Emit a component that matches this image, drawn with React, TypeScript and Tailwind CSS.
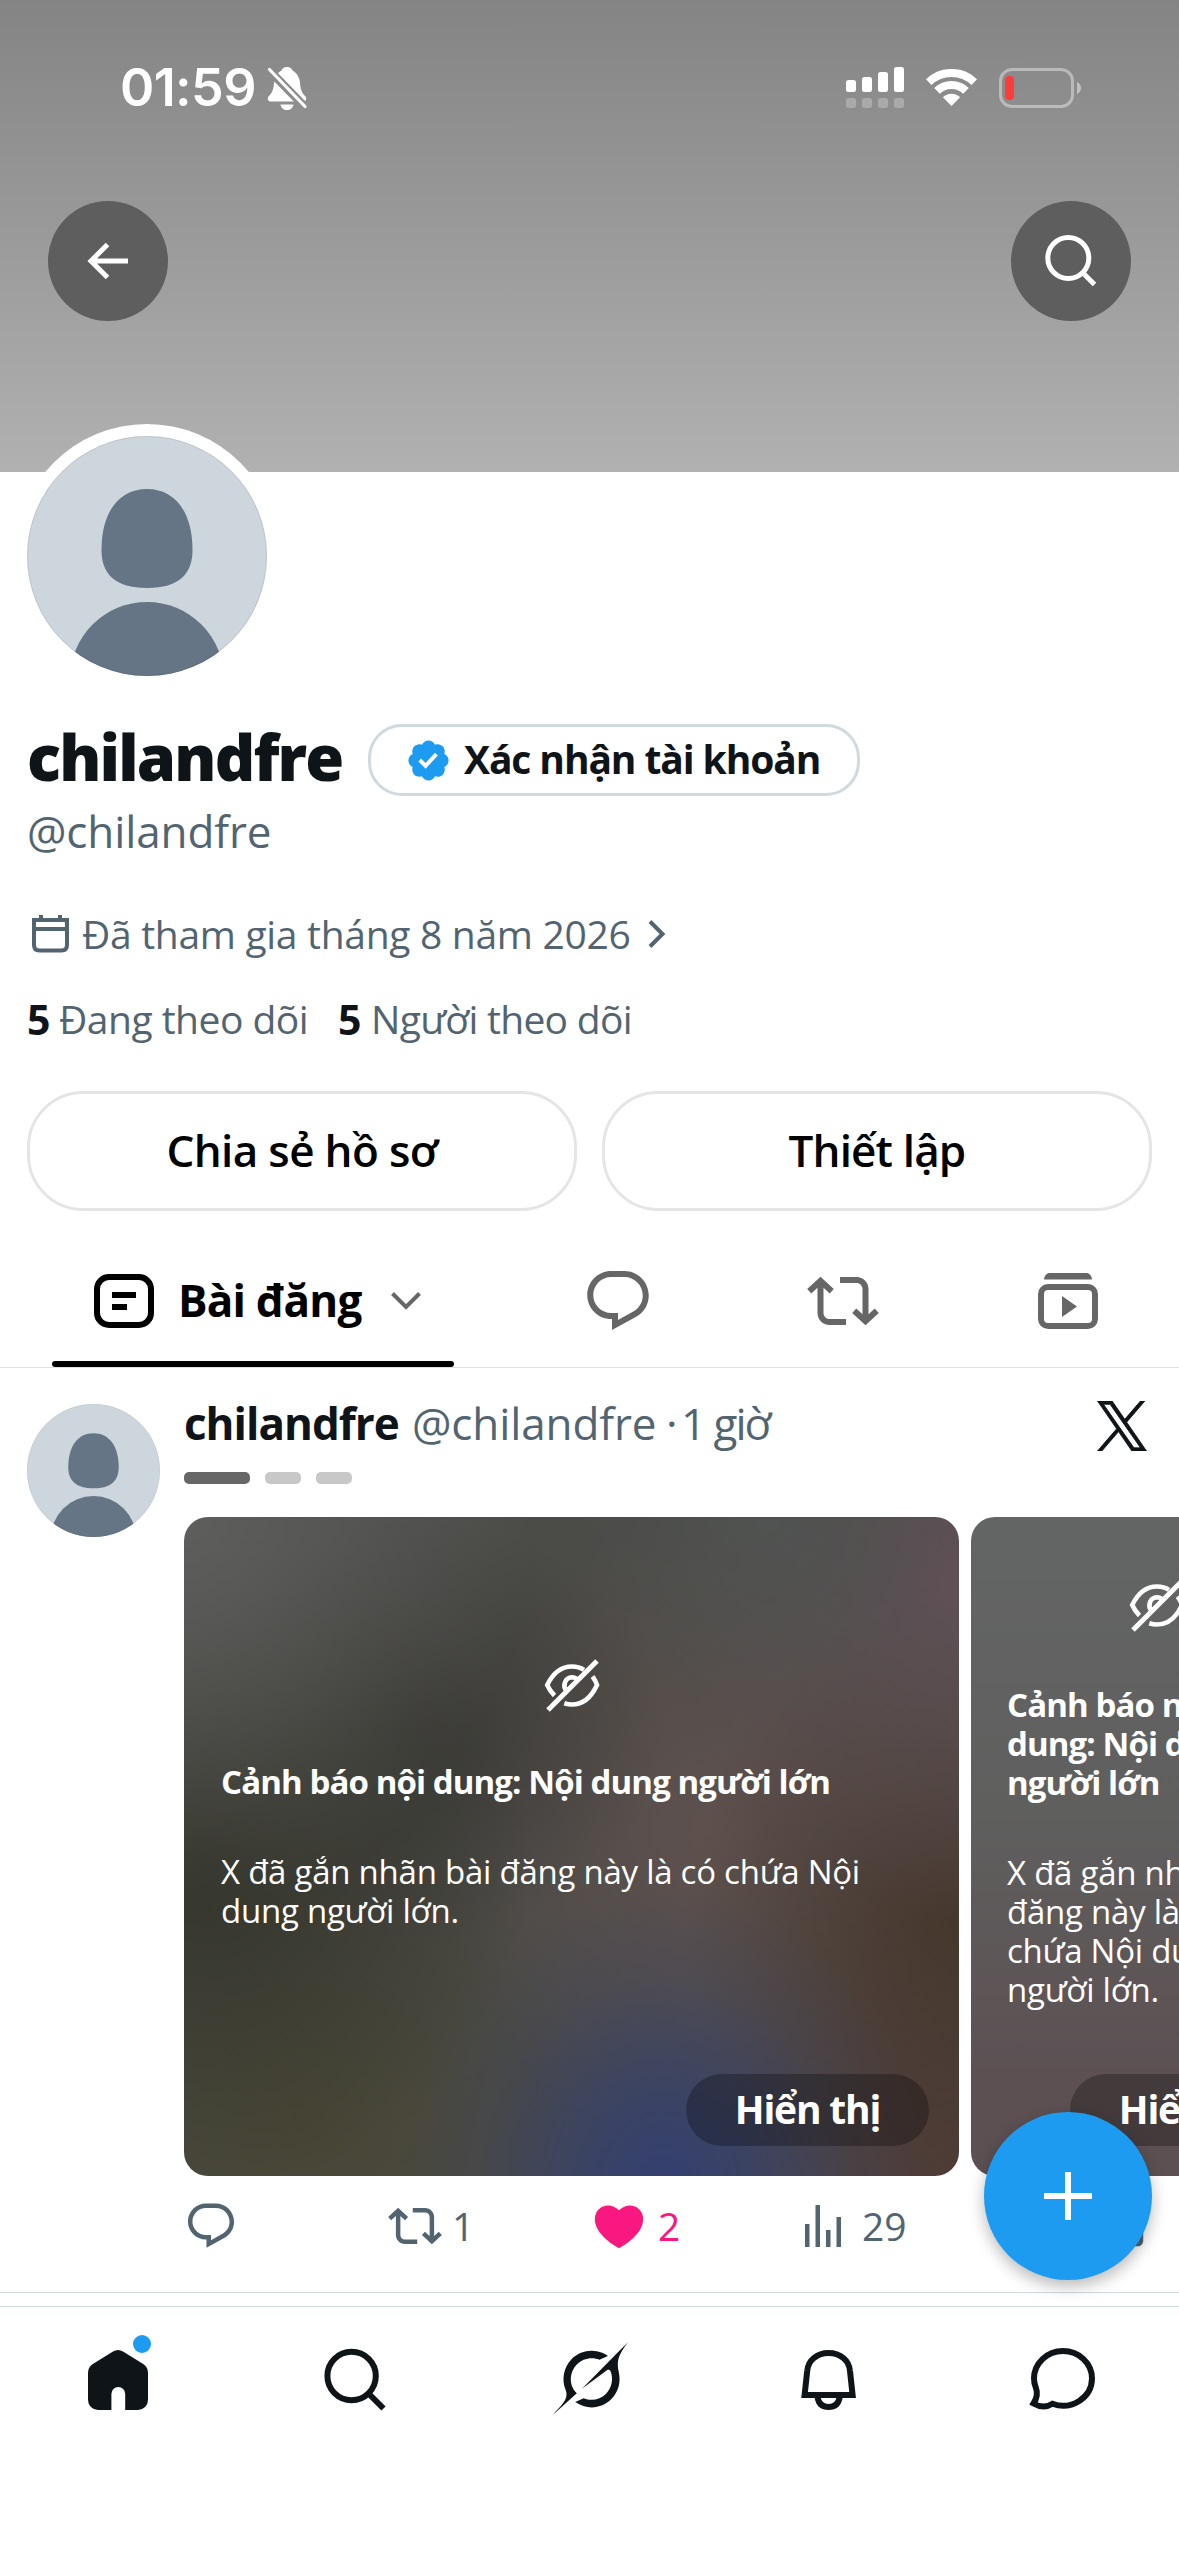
import { ReactNode } from "react";

const nav = "w-[72px] h-[72px] text-[#0f1419]";

function Avatar({ className }: { className: string }) {
  return (
    <svg viewBox="0 0 240 240" className={className}>
      <clipPath id="round">
        <circle cx="120" cy="120" r="120" />
      </clipPath>
      <g clipPath="url(#round)">
        <rect width="240" height="240" fill="#ccd6dc" />
        <path
          fill="#667585"
          d="M120 53C148 53 165.500 76 165.500 114C165.500 138 152 152 120 152C88 152 74.500 138 74.500 114C74.500 76 92 53 120 53Z"
        />
        <circle cx="120" cy="243" r="77" fill="#667585" />
      </g>
      <circle cx="120" cy="120" r="119.500" fill="none" stroke="#000" strokeOpacity="0.08" />
    </svg>
  );
}

function ReplyIcon({ className }: { className: string }) {
  return (
    <svg viewBox="0 0 24 24" fill="currentColor" className={className}>
      <path d="M1.751 10c0-4.42 3.584-8 8.005-8h4.366c4.49 0 8.129 3.64 8.129 8.13 0 2.96-1.607 5.68-4.196 7.11l-8.054 4.46v-3.69h-.067c-4.49.1-8.183-3.51-8.183-8.01zm8.005-6c-3.317 0-6.005 2.69-6.005 6 0 3.37 2.77 6.08 6.138 6.01l.351-.01h1.761v2.3l5.087-2.81c1.951-1.08 3.163-3.13 3.163-5.36 0-3.39-2.744-6.13-6.129-6.13H9.756z" />
    </svg>
  );
}

function RepostIcon({ className }: { className: string }) {
  return (
    <svg viewBox="0 0 24 24" fill="currentColor" className={className}>
      <path d="M4.5 3.88l4.432 4.14-1.364 1.46L5.5 7.55V16c0 1.1.896 2 2 2H13v2H7.5c-2.209 0-4-1.79-4-4V7.55L1.432 9.48.068 8.02 4.5 3.88zM16.5 6H11V4h5.5c2.209 0 4 1.79 4 4v8.45l2.068-1.93 1.364 1.46-4.432 4.14-4.432-4.14 1.364-1.46 2.068 1.93V8c0-1.1-.896-2-2-2z" />
    </svg>
  );
}

function EyeOffIcon() {
  return (
    <svg viewBox="0 0 56 56" fill="none" stroke="#fff" strokeWidth="4.600" className="w-14 h-14 shrink-0">
      <path d="M10.500 37.500C7.500 34.500 5 31 3.200 27C9.500 14 18 8.500 28 8.500C32.500 8.500 36.500 9.500 40 11.800" />
      <path d="M48.500 18.500C50.500 21 52 24 53 27C46.500 41 38 46.500 28 46.500C25.300 46.500 22.700 46 20.300 45.200" />
      <path d="M22 32.500C18.500 27.500 21 19.500 28 19.300C30 19.300 31.500 20 33 21" />
      <path d="M4 52L53 3" strokeWidth="5" />
    </svg>
  );
}

function StatusBar() {
  return (
    <div className="h-[176px] pl-[120px] pr-[98px] flex items-center text-white">
      <span className="font-['Inter',sans-serif] font-semibold text-[52px] leading-none tracking-[-0.6px]">01:59</span>
      <svg viewBox="0 0 42 46" className="w-[42px] h-[46px] ml-[10px]">
        <mask id="cut">
          <rect width="42" height="46" fill="#fff" />
          <path d="M1 3L42 45" stroke="#000" strokeWidth="8.500" />
        </mask>
        <g mask="url(#cut)" fill="#fff">
          <path d="M21 2C24 2 26 3.500 26.500 5.500C31 8 33.500 12.500 34 18C34.500 25 36 28 39.500 31.500C41 33.500 40 36.500 37.500 36.500H4.500C2 36.500 1 33.500 2.500 31.500C6 28 7.500 25 8 18C8.500 12.500 11 8 15.500 5.500C16 3.500 18 2 21 2Z" />
          <path d="M14.500 39.500H27.500C27 43 24.500 45 21 45C17.500 45 15 43 14.500 39.500Z" />
        </g>
        <path d="M3.500 4.500L39 41.500" stroke="#fff" strokeWidth="3.200" strokeLinecap="round" />
      </svg>
      <div className="flex-1" />
      <svg viewBox="0 0 58 42" className="w-[58px] h-[42px]">
        <g fill="#fff">
          <rect x="0" y="13" width="10" height="12" rx="2.500" />
          <rect x="16" y="10" width="10" height="15" rx="2.500" />
          <rect x="32" y="5" width="10" height="20" rx="2.500" />
          <rect x="48" y="0" width="10" height="25" rx="2.500" />
        </g>
        <g fill="#fff" fillOpacity="0.250">
          <rect x="0" y="31" width="10" height="10" rx="2.500" />
          <rect x="16" y="31" width="10" height="10" rx="2.500" />
          <rect x="32" y="31" width="10" height="10" rx="2.500" />
          <rect x="48" y="31" width="10" height="10" rx="2.500" />
        </g>
      </svg>
      <svg viewBox="0 0 51 38" className="w-[51px] h-[38px] ml-[22px]">
        <path d="M2.700 13.100A33 33 0 0 1 48.300 13.100" fill="none" stroke="#fff" strokeWidth="8" />
        <path d="M11 21.800A21 21 0 0 1 40 21.800" fill="none" stroke="#fff" strokeWidth="8" />
        <path d="M25.500 37L16.900 28.300A12.200 12.200 0 0 1 34.100 28.300Z" fill="#fff" />
      </svg>
      <svg viewBox="0 0 82 40" className="w-[82px] h-10 ml-[22px]">
        <rect x="1.500" y="1.500" width="72" height="37" rx="11.500" fill="none" stroke="#fff" strokeOpacity="0.400" strokeWidth="3" />
        <path d="M78 14C80.500 15 82 17.500 82 20C82 22.500 80.500 25 78 26Z" fill="#fff" fillOpacity="0.450" />
        <rect x="6" y="8" width="9" height="24" rx="4" fill="#ff3b3b" />
      </svg>
    </div>
  );
}

function Banner() {
  return (
    <div className="h-[472px] shrink-0 bg-linear-to-b from-[#848484] to-[#b1b1b1]">
      <StatusBar />
      <div className="flex justify-between px-12 mt-[25px]">
        <div className="w-[120px] h-[120px] rounded-full bg-[#5e5e5e]">
          <svg viewBox="0 0 120 120" fill="none" stroke="#fff" strokeWidth="5">
            <path d="M59.500 43.500L43 60L59.500 76.500M43 60H80" />
          </svg>
        </div>
        <div className="w-[120px] h-[120px] rounded-full bg-[#5e5e5e]">
          <svg viewBox="0 0 120 120" fill="none" stroke="#fff" strokeWidth="5">
            <circle cx="57.300" cy="57" r="20.500" />
            <path d="M71.500 71.500L83.500 83.500" />
          </svg>
        </div>
      </div>
    </div>
  );
}

function Profile() {
  return (
    <div className="flex flex-col">
      <div className="w-[264px] h-[264px] ml-[15px] -mt-12 p-3 rounded-full bg-white">
        <Avatar className="w-[240px] h-[240px]" />
      </div>
      <div className="px-[27px] flex flex-col">
        <div className="flex items-center mt-9 h-[72px]">
          <h1 className="font-extrabold text-[63px] leading-[64px] pb-[6px] tracking-[-1.8px] w-[341px] whitespace-nowrap">chilandfre</h1>
          <div className="w-[492px] h-[72px] rounded-[34px] border-[3px] border-[#cfd9de] flex items-center pl-[34px]">
            <svg viewBox="0 0 22 22" className="w-[47px] h-[47px]">
              <path
                fill="#1d9bf0"
                d="M20.396 11c-.018-.646-.215-1.275-.57-1.816-.354-.54-.852-.972-1.438-1.246.223-.607.27-1.264.14-1.897-.131-.634-.437-1.218-.882-1.687-.47-.445-1.053-.75-1.687-.882-.633-.13-1.29-.083-1.897.14-.273-.587-.704-1.086-1.245-1.44S11.647 1.62 11 1.604c-.646.017-1.273.213-1.813.568s-.969.854-1.24 1.44c-.608-.223-1.267-.272-1.902-.14-.635.13-1.22.436-1.69.882-.445.47-.749 1.055-.878 1.688-.13.633-.08 1.29.144 1.896-.587.274-1.087.705-1.443 1.245-.356.54-.555 1.17-.574 1.817.02.647.218 1.276.574 1.817.356.54.856.972 1.443 1.245-.224.606-.274 1.263-.144 1.896.13.634.433 1.218.877 1.688.47.443 1.054.747 1.687.878.633.132 1.29.084 1.897-.136.274.586.705 1.084 1.246 1.439.54.354 1.17.551 1.816.569.647-.016 1.276-.213 1.817-.567s.972-.854 1.245-1.44c.604.239 1.266.296 1.903.164.636-.132 1.22-.447 1.68-.907.46-.46.776-1.044.908-1.681s.075-1.299-.165-1.903c.586-.274 1.084-.705 1.439-1.246.354-.54.551-1.17.569-1.816zM9.662 14.85l-3.429-3.428 1.293-1.302 2.072 2.072 4.4-4.794 1.347 1.246z"
              />
            </svg>
            <span className="font-bold text-[39px] leading-10 ml-[12px] pb-[2px] tracking-[-1.1px] whitespace-nowrap">Xác nhận tài khoản</span>
          </div>
        </div>
        <p className="text-[44px] leading-[60px] mt-[5px] text-[#536471] tracking-[-0.1px]">@chilandfre</p>
        <div className="flex items-center h-10 mt-[53px] text-[#536471]">
          <svg viewBox="0 0 37 38" fill="none" stroke="currentColor" strokeWidth="4" className="w-[37px] h-[38px] ml-[5px]">
            <path d="M2 5H35V30C35 33.500 33 35.500 29.500 35.500H7.500C4 35.500 2 33.500 2 30Z" />
            <path d="M2 14H35" />
            <path d="M9 0V5M28 0V5" />
          </svg>
          <span className="text-[39px] leading-10 ml-[13px] w-[566px] tracking-[-0.3px] whitespace-nowrap">Đã tham gia tháng 8 năm 2026</span>
          <svg viewBox="0 0 18 28" fill="none" stroke="currentColor" strokeWidth="4" className="w-[18px] h-7">
            <path d="M2 1.500L14.500 14L2 26.500" />
          </svg>
        </div>
        <div className="flex items-center h-10 mt-[45px] text-[39px] leading-10 text-[#536471] whitespace-nowrap">
          <b className="text-[#0f1419] w-8 text-[41px]">5</b>
          <span className="w-[279px] tracking-[-0.5px]">Đang theo dõi</span>
          <b className="text-[#0f1419] w-[33px] text-[41px]">5</b>
          <span className="tracking-[-0.7px]">Người theo dõi</span>
        </div>
        <div className="grid grid-cols-2 gap-[25px] mt-[52px] font-semibold text-[44px] text-black">
          <button className="h-[120px] pb-[3px] rounded-[56px] border-[3px] border-[#e5e5e5] tracking-[-0.65px]">Chia sẻ hồ sơ</button>
          <button className="h-[120px] pb-[3px] rounded-[56px] border-[3px] border-[#e5e5e5] tracking-[-0.85px]">Thiết lập</button>
        </div>
      </div>
    </div>
  );
}

function Tab({ children }: { children: ReactNode }) {
  return <div className="flex-1 h-[120px] mb-[6px] pl-[2px] flex items-center justify-center text-[#666]">{children}</div>;
}

function Tabs() {
  return (
    <div className="flex items-end h-[157px] border-b border-[#e1e1e1]">
      <div className="w-[402px] ml-[52px] mr-[51px]">
        <div className="h-[120px] flex items-center pl-[42px]">
          <svg viewBox="0 0 60 54" fill="none" stroke="#000" strokeWidth="6" className="w-[60px] h-[54px]">
            <rect x="3" y="3" width="54" height="48" rx="12" />
            <path d="M18 21H42M18 33H33" />
          </svg>
          <span className="font-bold text-[44px] leading-[60px] text-black pb-[2px] ml-[24px] w-[213px] tracking-[-0.8px] whitespace-nowrap">Bài đăng</span>
          <svg viewBox="0 0 30 18" fill="none" stroke="#666" strokeWidth="4" className="w-[30px] h-[18px]">
            <path d="M1.500 1.500L15 15L28.500 1.500" />
          </svg>
        </div>
        <div className="h-[6px] rounded-full bg-black" />
      </div>
      <Tab>
        <ReplyIcon className="w-[72px] h-[72px]" />
      </Tab>
      <Tab>
        <RepostIcon className="w-[72px] h-[72px]" />
      </Tab>
      <Tab>
        <svg viewBox="0 0 60 56" fill="none" stroke="currentColor" strokeWidth="6" className="w-[60px] h-14">
          <path d="M6 6.500C6.500 2.500 8.500 0 12 0H48C51.500 0 53.500 2.500 54 6.500Z" fill="currentColor" stroke="none" />
          <rect x="3" y="14" width="54" height="39" rx="7" />
          <path d="M24 23L39 33.500L24 44Z" fill="currentColor" stroke="none" />
        </svg>
      </Tab>
    </div>
  );
}

function Media() {
  return (
    <div className="flex gap-3 mt-[33px] h-[659px] text-white">
      <div className="w-[775px] shrink-0 rounded-[24px] px-[37px] flex flex-col bg-[#4b4b48] bg-[radial-gradient(ellipse_34%_46%_at_62%_102%,#333f72_0%,#36416bcc_30%,#3d446444_70%,transparent_100%),radial-gradient(ellipse_45%_60%_at_0%_0%,#5e5e5d_0%,transparent_100%),radial-gradient(ellipse_24%_30%_at_75%_0%,#505351_0%,transparent_100%),radial-gradient(ellipse_36%_50%_at_100%_10%,#5f5055_0%,transparent_100%),radial-gradient(ellipse_35%_50%_at_100%_62%,#47372d_0%,transparent_100%),radial-gradient(ellipse_42%_50%_at_3%_52%,#33342a_0%,transparent_100%),radial-gradient(ellipse_32%_32%_at_30%_32%,#3b3a36_0%,transparent_100%),radial-gradient(ellipse_38%_48%_at_70%_48%,#5f514e_0%,transparent_100%),radial-gradient(ellipse_40%_50%_at_100%_100%,#513c39_0%,transparent_100%),radial-gradient(ellipse_45%_45%_at_15%_92%,#484635_0%,transparent_100%)]">
        <div className="flex justify-center mt-[141px]">
          <EyeOffIcon />
        </div>
        <p className="font-bold text-[33px] leading-[39.200px] mt-[48px] tracking-[-0.9px] whitespace-nowrap">Cảnh báo nội dung: Nội dung người lớn</p>
        <p className="text-[33px] leading-[39.200px] mt-[51px] tracking-[-0.25px] whitespace-nowrap">
          X đã gắn nhãn bài đăng này là có chứa Nội
          <br />
          dung người lớn.
        </p>
        <div className="flex-1" />
        <button className="self-end w-[243px] h-[72px] mb-[30px] -mr-[7px] pb-[3px] rounded-[36px] bg-black/27 font-bold text-[39px] leading-10 tracking-[-1.2px]">Hiển thị</button>
      </div>
      <div className="w-[372px] shrink-0 rounded-[24px] px-[36px] flex flex-col bg-linear-to-b from-[#636464] from-5% via-[#5f5f5e] via-45% to-[#5c5053] to-85%">
        <div className="flex justify-center mt-[61px]">
          <EyeOffIcon />
        </div>
        <p className="font-bold text-[33px] leading-[39.200px] mt-[51px] tracking-[-0.9px] whitespace-nowrap">
          Cảnh báo nội
          <br />
          dung: Nội dung
          <br />
          người lớn
        </p>
        <p className="text-[33px] leading-[39.200px] mt-[50px] tracking-[-0.25px] whitespace-nowrap">
          X đã gắn nhãn bài
          <br />
          đăng này là có
          <br />
          chứa Nội dung
          <br />
          người lớn.
        </p>
        <div className="flex-1" />
        <button className="self-end w-[243px] h-[72px] mb-[30px] -mr-[6px] pb-[3px] rounded-[36px] bg-black/27 font-bold text-[39px] leading-10 tracking-[-1.2px]">Hiển thị</button>
      </div>
    </div>
  );
}

function Post() {
  return (
    <div className="flex pt-[33px] pl-[27px] h-[925px] shrink-0 border-b border-[#cfd9de]">
      <Avatar className="w-[133px] h-[133px] mt-[3px] shrink-0" />
      <div className="ml-6 w-[995px]">
        <div className="flex items-center h-[49px] pr-8 text-[44px] leading-[49px] text-[#536471] whitespace-nowrap">
          <b className="pb-[5px] w-[228px] text-[#0f1419] tracking-[-1px]">chilandfre</b>
          <span className="pb-[5px] w-[254px] tracking-[-0.1px]">@chilandfre</span>
          <span className="pb-[5px] w-[15px]">·</span>
          <span className="pb-[5px] tracking-[-2px]">1 giờ</span>
          <svg viewBox="0 0 1200 1227" className="w-[50px] h-[50px] ml-auto">
            <path
              fill="#0f1419"
              stroke="#0f1419"
              strokeWidth="22"
              d="M714.163 519.284L1160.89 0H1055.03L667.137 450.887L357.328 0H0L468.492 681.821L0 1226.37H105.866L515.491 750.218L842.672 1226.37H1200L714.137 519.284H714.163ZM569.165 687.828L521.697 619.934L144.011 79.6944H306.615L611.412 515.685L658.88 583.579L1055.08 1150.3H892.476L569.165 687.854V687.828Z"
            />
          </svg>
        </div>
        <div className="flex mt-[22px] h-3">
          <div className="w-[66px] rounded-[5px] bg-[#676767]" />
          <div className="w-9 ml-[15px] rounded-[5px] bg-[#c8c8c8]" />
          <div className="w-9 ml-[15px] rounded-[5px] bg-[#c8c8c8]" />
        </div>
        <Media />
        <div className="flex items-center h-[54px] mt-[23px] text-[39px] leading-10 text-[#536471]">
          <div className="w-[204px]">
            <ReplyIcon className="w-[54px] h-[54px]" />
          </div>
          <div className="w-[202px] flex items-center">
            <RepostIcon className="w-[54px] h-[54px] mr-[10px]" />1
          </div>
          <div className="w-[215px] flex items-center text-[#f91880]">
            <svg viewBox="0 0 24 24" fill="currentColor" className="w-[58px] h-[58px] mr-[10px]">
              <path d="M20.884 13.19c-1.351 2.48-4.001 5.12-8.379 7.67l-.503.3-.504-.3c-4.379-2.55-7.029-5.19-8.382-7.67-1.36-2.5-1.41-4.86-.514-6.67.887-1.79 2.647-2.91 4.601-3.01 1.651-.09 3.368.56 4.798 2.01 1.429-1.45 3.146-2.1 4.796-2.01 1.954.1 3.714 1.22 4.601 3.01.896 1.81.846 4.17-.514 6.67z" />
            </svg>
            2
          </div>
          <div className="w-[291px] flex items-center">
            <svg viewBox="0 0 36 42" fill="currentColor" className="w-9 h-[42px] mr-[21px]">
              <rect x="0" y="19" width="4.500" height="23" />
              <rect x="10.500" y="0" width="4.500" height="42" />
              <rect x="21" y="25" width="4.500" height="17" />
              <rect x="31.500" y="12" width="4.500" height="30" />
            </svg>
            29
          </div>
          <svg viewBox="0 0 24 24" fill="currentColor" className="w-[54px] h-[54px]">
            <path d="M12 2.590l5.700 5.700-1.410 1.420L13 6.410V16h-2V6.410l-3.300 3.300-1.410-1.420L12 2.590zM21 15l-.02 3.510c0 1.380-1.120 2.490-2.500 2.490H5.500C4.110 21 3 19.880 3 18.500V15h2v3.500c0 .28.22.5.5.5h12.980c.28 0 .5-.22.5-.5L19 15h2z" />
          </svg>
        </div>
      </div>
    </div>
  );
}

function NavItem({ children }: { children: ReactNode }) {
  return <div className="flex-1 flex justify-center">{children}</div>;
}

function BottomNav() {
  return (
    <div className="mt-[13px] flex-1 border-t border-[#cfd9de] bg-white flex items-start pt-[37px]">
      <NavItem>
        <div className="relative">
          <svg viewBox="0 0 72 72" fill="currentColor" className={nav}>
            <path d="M16 66H29.400V50A6.900 7 0 0 1 43.200 50V66H56A10 10 0 0 0 66 56V29Q66 23.500 62 20.500L41 7.500Q36 4.500 31 7.500L10 20.500Q6 23.500 6 29V56A10 10 0 0 0 16 66Z" />
          </svg>
          <div className="absolute left-[51px] -top-[9px] w-[18px] h-[18px] rounded-full bg-[#1d9bf0]" />
        </div>
      </NavItem>
      <NavItem>
        <svg viewBox="0 0 72 72" fill="none" stroke="currentColor" strokeWidth="6" className={nav}>
          <circle cx="33.600" cy="32" r="24.200" />
          <path d="M50.500 49.500L65.500 64.500" />
        </svg>
      </NavItem>
      <NavItem>
        <svg viewBox="0 0 33 32" fill="currentColor" className="w-[75px] h-[73px] -mt-[2px] ml-[3px] text-[#0f1419]">
          <path d="M12.745 20.540l10.970-8.190c.539-.4 1.307-.244 1.564.38 1.349 3.288.746 7.241-1.938 9.955-2.683 2.714-6.417 3.310-9.830 1.954l-3.728 1.745c5.347 3.697 11.840 2.782 15.898-1.324 3.219-3.255 4.216-7.692 3.284-11.693l.008.009c-1.351-5.878.332-8.227 3.782-13.031L33 0l-4.540 4.590v-.014L12.743 20.544m-2.263 1.987c-3.837-3.707-3.175-9.446.1-12.755 2.420-2.449 6.388-3.448 9.852-1.979l3.720-1.737c-.67-.49-1.530-1.017-2.515-1.387-4.455-1.854-9.789-.931-13.410 2.728-3.483 3.523-4.579 8.940-2.697 13.561 1.405 3.454-.899 5.898-3.220 8.364C1.490 30.200.666 31.074 0 32l10.478-9.466" />
        </svg>
      </NavItem>
      <NavItem>
        <svg viewBox="0 0 72 72" fill="none" stroke="currentColor" strokeWidth="6" className={nav}>
          <path d="M15.600 51L18.200 27C19 16.500 28 9 39.600 9S60.200 16.500 61 27L63.600 51Z" />
          <path d="M28.500 53C29.500 59.500 33.500 63 39.600 63S49.700 59.500 50.700 53" />
        </svg>
      </NavItem>
      <NavItem>
        <svg viewBox="0 0 72 72" fill="none" stroke="currentColor" strokeWidth="6" className={nav}>
          <path d="M8.500 59.500C12.500 53.500 12.500 48 10.800 43.500C9.600 40.500 9 37.500 9 34.500A29 27.500 0 0 1 67 34.500A29 27.500 0 0 1 27.500 59.800C21.500 63.500 14.500 63 8.500 59.500Z" />
        </svg>
      </NavItem>
    </div>
  );
}

export default function App() {
  return (
    <div className="relative w-[1179px] h-[2556px] overflow-hidden bg-white flex flex-col font-['Open_Sans',sans-serif] text-[#0f1419]">
      <Banner />
      <Profile />
      <Tabs />
      <Post />
      <BottomNav />
      <div className="absolute left-[984px] top-[2112px] w-[168px] h-[168px] rounded-full bg-[#1d9bf0] shadow-[0_6px_16px_rgba(0,0,0,0.28)]">
        <svg viewBox="0 0 168 168" stroke="#fff" strokeWidth="6">
          <path d="M60 84H108M84 60V108" />
        </svg>
      </div>
    </div>
  );
}
